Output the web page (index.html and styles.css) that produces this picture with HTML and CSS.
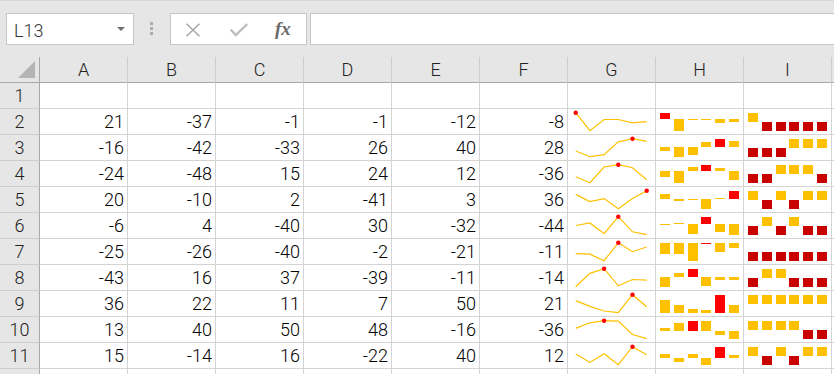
FILE: index.html
```html
<!DOCTYPE html>
<html lang="en">
<head>
    <meta charset="UTF-8">
    <meta name="viewport" content="width=device-width, initial-scale=1.0">
    <title>Sparklines</title>
    <link rel="stylesheet" href="styles.css">
</head>
<body>
    <div class="toolbar">
        <div class="name-box">
            <span>L13</span>
            <svg class="drop" width="8" height="4" viewBox="0 0 8 4"><path d="M0 0h8L4 4z" fill="#707070"/></svg>
        </div>
        <div class="grip"><i></i><i></i><i></i></div>
        <div class="fx-buttons">
            <svg class="btn-cancel" width="16" height="14" viewBox="0 0 16 14">
                <path d="M1.5 0.8L14.5 13.2M14.5 0.8L1.5 13.2" stroke="#a4a4a4" stroke-width="1.4" fill="none"/>
            </svg>
            <svg class="btn-enter" width="18" height="14" viewBox="0 0 18 14">
                <path d="M0.8 6.6L5.8 12L17.2 1.2" stroke="#bdbdbd" stroke-width="2.4" fill="none"/>
            </svg>
            <span class="fx">fx</span>
        </div>
        <div class="formula-input"></div>
    </div>

    <div class="sheet" id="sheet">
        <div class="cell corner">
            <svg width="17" height="17" viewBox="0 0 17 17"><path d="M17 0V17H0z" fill="#b4b4b4"/></svg>
        </div>
    </div>

    <script>
        const data = [
            null,
            [21, -37, -1, -1, -12, -8],
            [-16, -42, -33, 26, 40, 28],
            [-24, -48, 15, 24, 12, -36],
            [20, -10, 2, -41, 3, 36],
            [-6, 4, -40, 30, -32, -44],
            [-25, -26, -40, -2, -21, -11],
            [-43, 16, 37, -39, -11, -14],
            [36, 22, 11, 7, 50, 21],
            [13, 40, 50, 48, -16, -36],
            [15, -14, 16, -22, 40, 12]
        ];
        const letters = ['A', 'B', 'C', 'D', 'E', 'F', 'G', 'H', 'I', ''];
        const sheet = document.getElementById('sheet');

        const TOP = 3.7;
        const RANGE = 18;
        const YELLOW = '#ffc000';
        const HIGH = '#ff0000';
        const LOSS = '#c80000';

        function addCell(cls, text) {
            const el = document.createElement('div');
            el.className = 'cell ' + cls;
            if (text !== undefined) el.textContent = text;
            sheet.appendChild(el);
            return el;
        }

        function yOf(v, hi, lo) {
            return TOP + (hi - v) / (hi - lo) * RANGE;
        }

        function lineSpark(vals) {
            const hi = Math.max(...vals);
            const lo = Math.min(...vals);
            const pts = vals.map((v, i) => [7.7 + i * 14.2, yOf(v, hi, lo)]);
            const top = pts[vals.indexOf(hi)];
            const line = pts.map(p => p[0].toFixed(1) + ',' + p[1].toFixed(1)).join(' ');
            return '<svg width="87" height="25">' +
                '<polyline points="' + line + '" fill="none" stroke="' + YELLOW + '" stroke-width="1.2"/>' +
                '<circle cx="' + top[0].toFixed(1) + '" cy="' + top[1].toFixed(1) + '" r="2.2" fill="' + HIGH + '"/>' +
                '</svg>';
        }

        function columnSpark(vals) {
            const hi = Math.max(0, ...vals);
            const lo = Math.min(0, ...vals);
            const zero = yOf(0, hi, lo);
            const k = vals.indexOf(Math.max(...vals));
            let bars = '';
            vals.forEach((v, i) => {
                const y = yOf(v, hi, lo);
                const y1 = Math.round(Math.min(y, zero));
                const y2 = Math.round(Math.max(y, zero));
                const h = Math.max(1, y2 - y1);
                const x = Math.round(4 + i * 13.8);
                bars += '<rect x="' + x + '" y="' + y1 + '" width="10" height="' + h + '" fill="' + (i === k ? HIGH : YELLOW) + '"/>';
            });
            return '<svg width="87" height="25">' + bars + '</svg>';
        }

        function winLossSpark(vals) {
            let bars = '';
            vals.forEach((v, i) => {
                const x = Math.round(4 + i * 13.8);
                if (v > 0) bars += '<rect x="' + x + '" y="4" width="10" height="9" fill="' + YELLOW + '"/>';
                if (v < 0) bars += '<rect x="' + x + '" y="13" width="10" height="9" fill="' + LOSS + '"/>';
            });
            return '<svg width="87" height="25">' + bars + '</svg>';
        }

        // Column headers
        letters.forEach(l => addCell('col-head', l));

        // Rows, plus an empty one peeking in at the bottom
        data.concat([null]).forEach((vals, r) => {
            addCell('row-head', r < data.length ? r + 1 : '');
            for (let c = 0; c < 6; c++) {
                addCell('num', vals ? vals[c] : '');
            }
            addCell('spark').innerHTML = vals ? lineSpark(vals) : '';
            addCell('spark').innerHTML = vals ? columnSpark(vals) : '';
            addCell('spark').innerHTML = vals ? winLossSpark(vals) : '';
            addCell('num', '');
        });
    </script>
</body>
</html>
```

FILE: styles.css
```css
:root {
    --grid: #d4d4d4;
    --head: #e6e6e6;
    --head-line: #a9a9a9;
    --head-sep: #cdcdcd;
    --box-border: #c6c6c6;
}

body {
    margin: 0;
    height: 374px;
    overflow: hidden;
    background: #fff;
    font-family: Roboto, 'Liberation Sans', sans-serif;
    font-weight: 300;
    font-size: 18px;
    color: #000;
}

.toolbar {
    height: 57px;
    box-sizing: border-box;
    border-top: 1px solid #d6d6d6;
    padding-top: 12px;
    background: var(--head);
    display: flex;
    align-items: flex-start;
}

.name-box {
    margin-left: 6px;
    width: 128px;
    height: 32px;
    box-sizing: border-box;
    border: 1px solid var(--box-border);
    background: #fff;
    display: flex;
    align-items: center;
    padding: 2px 8px 0 7px;
    color: #333;
}

.name-box .drop {
    margin-left: auto;
    margin-top: -2px;
}

.grip {
    margin: 9px 17px 0 16px;
    display: flex;
    flex-direction: column;
    gap: 2px;
}

.grip i {
    display: block;
    width: 3px;
    height: 3px;
    background: #ababab;
}

.fx-buttons {
    width: 137px;
    height: 32px;
    box-sizing: border-box;
    border: 1px solid var(--box-border);
    background: #fff;
    display: flex;
    align-items: center;
    padding-left: 14px;
}

.btn-cancel {
    margin-top: 1px;
}

.btn-enter {
    margin-left: 29px;
    margin-top: 2px;
}

.fx {
    margin-left: 27px;
    font-family: 'Liberation Serif', serif;
    font-style: italic;
    font-weight: 700;
    font-size: 19px;
    color: #6a6a6a;
}

.formula-input {
    flex: 1;
    margin-left: 3px;
    height: 32px;
    box-sizing: border-box;
    border: 1px solid var(--box-border);
    border-right: none;
    background: #fff;
}

.sheet {
    height: 317px;
    overflow: hidden;
    display: grid;
    grid-template-columns: 40px repeat(10, 88px);
    grid-auto-rows: 26px;
}

.cell {
    box-sizing: border-box;
    border-right: 1px solid var(--grid);
    border-bottom: 1px solid var(--grid);
    line-height: 25px;
    white-space: nowrap;
    overflow: hidden;
}

.num {
    text-align: right;
    padding-right: 3px;
}

.spark svg {
    display: block;
}

.col-head {
    background: var(--head);
    border-right-color: var(--head-sep);
    border-bottom-color: var(--head-line);
    text-align: center;
    color: #222;
}

.row-head {
    background: var(--head);
    border-right-color: var(--head-line);
    border-bottom-color: var(--head-sep);
    text-align: center;
    color: #222;
}

.corner {
    background: var(--head);
    border-right-color: var(--head-line);
    border-bottom-color: var(--head-line);
    padding: 4px 0 0 18px;
}

.corner svg {
    display: block;
}
```
